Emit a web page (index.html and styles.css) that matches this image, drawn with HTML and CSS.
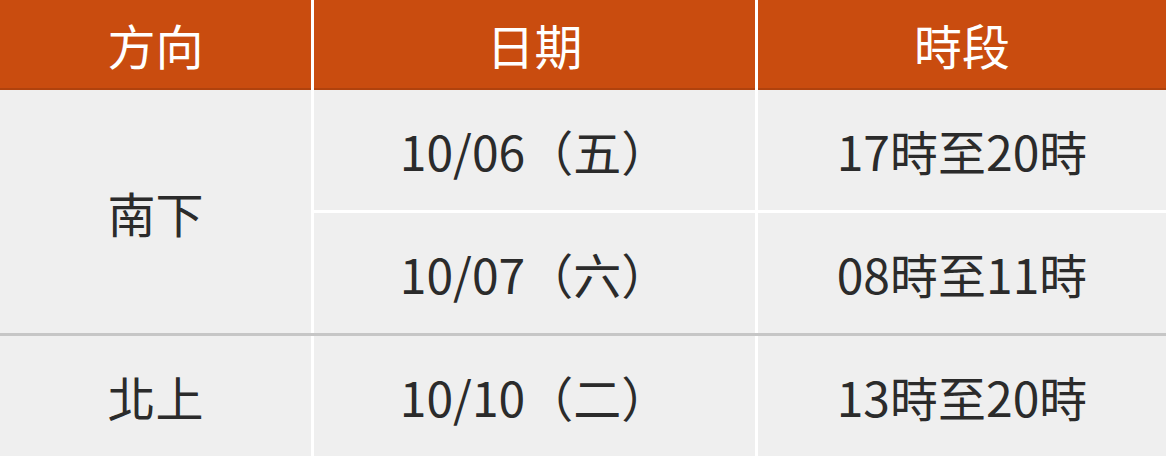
FILE: index.html
```html
<!DOCTYPE html>
<html lang="zh-Hant">
<head>
<meta charset="utf-8">
<link rel="stylesheet" href="styles.css">
</head>
<body>
<div class="schedule">
  <div class="head">方向</div>
  <div class="head">日期</div>
  <div class="head">時段</div>

  <div class="cell dir span3">南下</div>
  <div class="cell r2">10/06（五）</div>
  <div class="cell r2">17時至20時</div>
  <div class="cell r4">10/07（六）</div>
  <div class="cell r4">08時至11時</div>

  <div class="divider"></div>

  <div class="cell dir r6">北上</div>
  <div class="cell r6">10/10（二）</div>
  <div class="cell r6">13時至20時</div>
</div>
</body>
</html>
```

FILE: styles.css
```css
html, body {
  margin: 0;
  padding: 0;
  background: #ffffff;
}
.schedule {
  display: grid;
  grid-template-columns: 311px 441px 408px;
  grid-template-rows: 90px 120px 3px 120px 3px 120px;
  column-gap: 3px;
  width: 1166px;
  font-family: "Noto Sans CJK TC", "Noto Sans", sans-serif;
  font-size: 48px;
  background: #ffffff;
}
.head {
  grid-row: 1;
  background: #c94c0f;
  color: #ffffff;
  display: flex;
  align-items: center;
  justify-content: center;
  box-shadow: inset 0 -2px 0 rgba(0, 0, 0, 0.12);
  padding-bottom: 2px;
}
.cell {
  background: #efefef;
  color: #2b2b2b;
  display: flex;
  align-items: center;
  justify-content: center;
}
.span3 { grid-column: 1; grid-row: 2 / 5; }
.r2 { grid-row: 2; }
.r4 { grid-row: 4; }
.r6 { grid-row: 6; }
.divider {
  grid-column: 1 / -1;
  grid-row: 5;
  background: #c6c6c6;
}
```
